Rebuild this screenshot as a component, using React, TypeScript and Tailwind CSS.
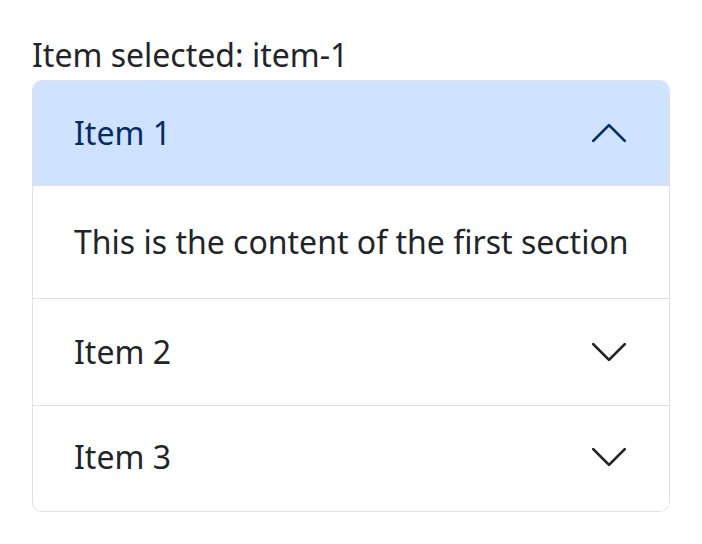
import { useState } from "react";

const items = [
  { id: "item-1", title: "Item 1", content: "This is the content of the first section" },
  { id: "item-2", title: "Item 2", content: "This is the content of the second section" },
  { id: "item-3", title: "Item 3", content: "This is the content of the third section" },
];

const Chevron = ({ open }: { open: boolean }) => (
  <svg
    width="42"
    height="42"
    viewBox="0 0 16 16"
    fill="none"
    stroke="currentColor"
    strokeWidth="1.05"
    strokeLinecap="round"
    strokeLinejoin="round"
    className={open ? "rotate-180" : ""}
  >
    <path d="M2 5l6 6 6-6" />
  </svg>
);

const App = () => {
  const [selected, setSelected] = useState<string | null>("item-1");

  return (
    <div className="min-h-screen bg-white px-[32px] pt-[31px] font-['Noto_Sans',sans-serif] text-[32px] text-[#212529]">
      <p className="mb-[1px] leading-[48px]">Item selected: {selected ?? "none"}</p>
      <div className="w-[638px] overflow-hidden rounded-[10px] border border-[#dee2e6]">
        {items.map((item, i) => {
          const open = selected === item.id;
          const last = i === items.length - 1;
          return (
            <div key={item.id} className={i > 0 ? "border-t border-[#dee2e6]" : ""}>
              <button
                onClick={() => setSelected(open ? null : item.id)}
                className={`flex w-full items-center justify-between pl-[41px] pr-[39px] text-left leading-[48px] ${
                  open
                    ? "h-[104px] bg-[#cfe2ff] text-[#052c65]"
                    : last
                      ? "h-[105px] pb-[3px] bg-white text-[#212529]"
                      : "h-[106px] bg-white text-[#212529]"
                }`}
              >
                <span>{item.title}</span>
                <Chevron open={open} />
              </button>
              {open && (
                <div className="flex h-[113px] items-center border-t border-[#dee2e6] pl-[41px] pr-[39px] leading-[48px]">
                  {item.content}
                </div>
              )}
            </div>
          );
        })}
      </div>
    </div>
  );
};

export default App;
